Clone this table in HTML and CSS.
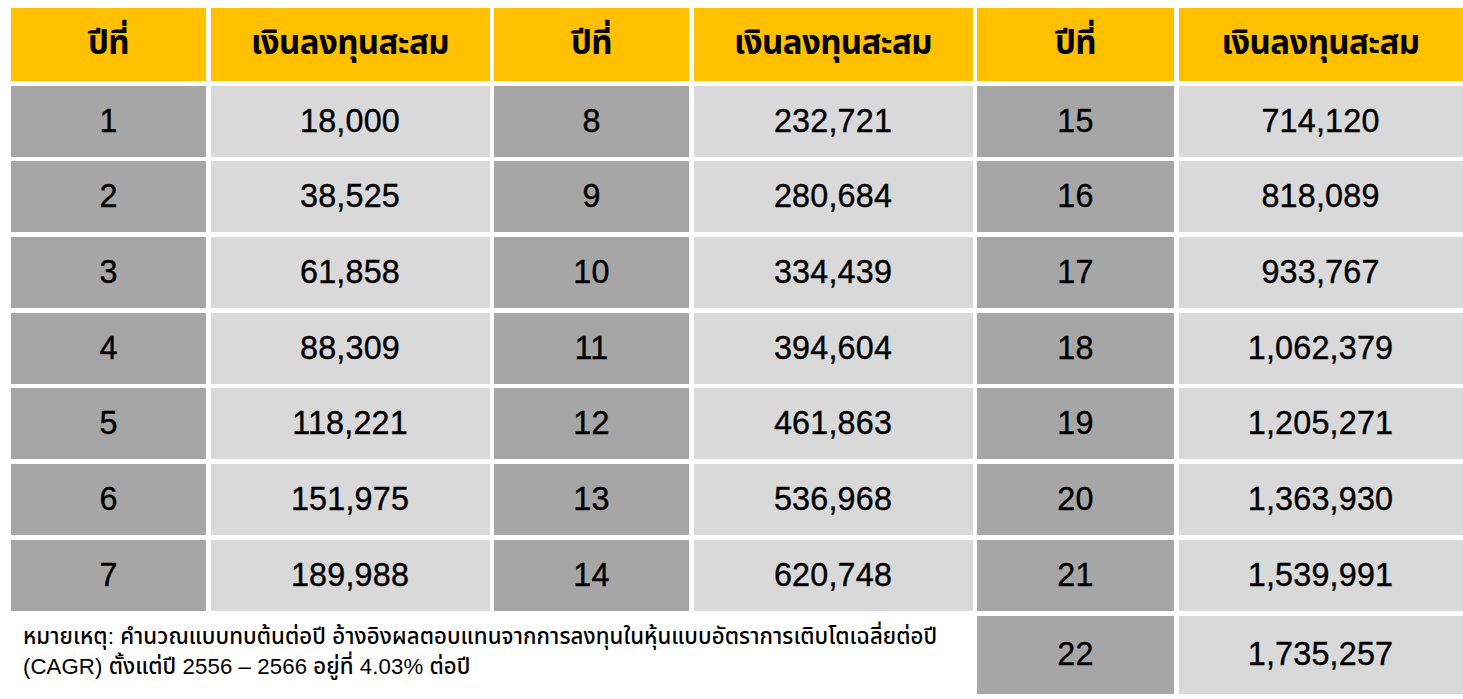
FILE: index.html
```html
<!DOCTYPE html>
<html lang="th">
<head>
<meta charset="utf-8">
<title>เงินลงทุนสะสม</title>
<link rel="stylesheet" href="styles.css">
</head>
<body>
<div class="sheet">
  <div class="cell head">ปีที่</div><div class="cell head">เงินลงทุนสะสม</div>
  <div class="cell head">ปีที่</div><div class="cell head">เงินลงทุนสะสม</div>
  <div class="cell head">ปีที่</div><div class="cell head">เงินลงทุนสะสม</div>

  <div class="cell year">1</div><div class="cell amt">18,000</div>
  <div class="cell year">8</div><div class="cell amt">232,721</div>
  <div class="cell year">15</div><div class="cell amt">714,120</div>

  <div class="cell year">2</div><div class="cell amt">38,525</div>
  <div class="cell year">9</div><div class="cell amt">280,684</div>
  <div class="cell year">16</div><div class="cell amt">818,089</div>

  <div class="cell year">3</div><div class="cell amt">61,858</div>
  <div class="cell year">10</div><div class="cell amt">334,439</div>
  <div class="cell year">17</div><div class="cell amt">933,767</div>

  <div class="cell year">4</div><div class="cell amt">88,309</div>
  <div class="cell year">11</div><div class="cell amt">394,604</div>
  <div class="cell year">18</div><div class="cell amt">1,062,379</div>

  <div class="cell year">5</div><div class="cell amt">118,221</div>
  <div class="cell year">12</div><div class="cell amt">461,863</div>
  <div class="cell year">19</div><div class="cell amt">1,205,271</div>

  <div class="cell year">6</div><div class="cell amt">151,975</div>
  <div class="cell year">13</div><div class="cell amt">536,968</div>
  <div class="cell year">20</div><div class="cell amt">1,363,930</div>

  <div class="cell year">7</div><div class="cell amt">189,988</div>
  <div class="cell year">14</div><div class="cell amt">620,748</div>
  <div class="cell year">21</div><div class="cell amt">1,539,991</div>

  <p class="note">หมายเหตุ: คำนวณแบบทบต้นต่อปี อ้างอิงผลตอบแทนจากการลงทุนในหุ้นแบบอัตราการเติบโตเฉลี่ยต่อปี<br>(CAGR) ตั้งแต่ปี 2556 – 2566 อยู่ที่ 4.03% ต่อปี</p>
  <div class="cell year">22</div><div class="cell amt">1,735,257</div>
</div>
</body>
</html>
```
FILE: styles.css
```css
html, body {
  margin: 0;
  padding: 0;
  background: #ffffff;
}
body {
  font-family: "Liberation Sans", Arial, sans-serif;
  color: #000000;
}
.sheet {
  display: grid;
  grid-template-columns: 195px 279px 195px 279px 197px 284px;
  grid-template-rows: 73px repeat(7, 71px) 78px;
  column-gap: 4.5px;
  row-gap: 4.7px;
  padding: 8px 0 0 11px;
}
.cell {
  display: flex;
  align-items: center;
  justify-content: center;
  font-size: 32.3px;
  letter-spacing: 0.2px;
  -webkit-text-stroke: 0.4px #000000;
}
.head {
  background: #ffc000;
  font-family: "Noto Sans Thai", "Noto Sans", sans-serif;
  font-weight: 700;
  font-size: 33px;
  letter-spacing: -0.6px;
  -webkit-text-stroke: 0;
  padding-bottom: 2px;
}
.year {
  background: #a6a6a6;
}
.amt {
  background: #d9d9d9;
}
.note {
  grid-column: 1 / 5;
  margin: 0;
  padding: 6px 0 0 12px;
  font-family: "Liberation Sans", "Noto Sans Thai", sans-serif;
  font-weight: 500;
  font-size: 22.2px;
  line-height: 30px;
  letter-spacing: 0.1px;
}
```
